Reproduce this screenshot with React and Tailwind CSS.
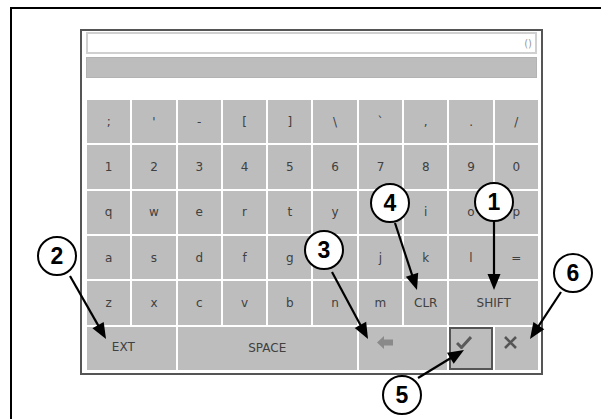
import React from "react";

const rows = [
  [";", "'", "-", "[", "]", "\\", "`", ",", ".", "/"],
  ["1", "2", "3", "4", "5", "6", "7", "8", "9", "0"],
  ["q", "w", "e", "r", "t", "y", "u", "i", "o", "p"],
  ["a", "s", "d", "f", "g", "h", "j", "k", "l", "="],
];
const row5 = ["z", "x", "c", "v", "b", "n", "m", "CLR"];

const arrows = [
  [494, 222, 494, 290],
  [70, 276, 106, 339],
  [332, 272, 368, 339],
  [395, 223, 417, 290],
  [418, 378, 464, 350],
  [561, 292, 530, 339],
];

const circles = [
  { n: "1", x: 494, y: 202 },
  { n: "2", x: 57, y: 256 },
  { n: "3", x: 324, y: 250 },
  { n: "4", x: 390, y: 203 },
  { n: "5", x: 402, y: 395 },
  { n: "6", x: 573, y: 273 },
];

function Arrow({ a }) {
  const [x1, y1, x2, y2] = a;
  const dx = x2 - x1;
  const dy = y2 - y1;
  const len = Math.hypot(dx, dy);
  const ux = dx / len;
  const uy = dy / len;
  const hl = 16;
  const hw = 6.5;
  const bx = x2 - ux * hl;
  const by = y2 - uy * hl;
  const px = -uy;
  const py = ux;
  const pts = `${x2},${y2} ${bx + px * hw},${by + py * hw} ${bx - px * hw},${by - py * hw}`;
  return (
    <g>
      <line x1={x1} y1={y1} x2={bx + ux * 2} y2={by + uy * 2} stroke="#000" strokeWidth="2.2" />
      <polygon points={pts} fill="#000" />
    </g>
  );
}

function Key({ children, className = "" }) {
  return (
    <div className={`bg-[#bdbdbd] flex items-center justify-center text-[12px] text-[#404040] ${className}`}>
      {children}
    </div>
  );
}

export default function App() {
  return (
    <div className="relative w-[601px] h-[419px] bg-white overflow-hidden" style={{ fontFamily: "'DejaVu Sans', sans-serif" }}>
      <div className="mt-[7px] ml-[10px] h-[412px] border-t-2 border-l-2 border-black pt-[20px] pl-[68px]">
        <div className="w-[463px] h-[346px] border-2 border-[#555] bg-white flex flex-col pt-[1px] px-[4px]">
          <div className="relative h-[22px] border-2 border-[#d0d0d0] bg-white">
            <span className="absolute right-[3px] top-[2px] text-[10px] text-[#999]">()</span>
          </div>
          <div className="mt-[3px] h-[21px] bg-[#bdbdbd] border border-[#b3b3b3]" />
          <div className="mt-[22px] ml-[1px] w-[451px] h-[270px] grid grid-cols-10 grid-rows-6 gap-[2px]">
            {rows.map((r, i) => r.map((k, j) => <Key key={`${i}-${j}`}>{k}</Key>))}
            {row5.map((k) => (
              <Key key={k}>{k}</Key>
            ))}
            <Key className="col-span-2">SHIFT</Key>
            <Key className="col-span-2 pr-[16px] pb-[2px]">EXT</Key>
            <Key className="col-span-4">SPACE</Key>
            <Key className="col-span-2 justify-start pl-[18px] pb-[12px]">
              <svg width="16" height="13" viewBox="0 0 16 13">
                <polygon points="0,6.5 7,0 7,3.5 16,3.5 16,9.5 7,9.5 7,13" fill="#8a8a8a" />
              </svg>
            </Key>
            <Key className="border-2 border-[#555] pr-[14px] pb-[12px]">
              <svg width="16" height="14" viewBox="0 0 16 14">
                <path d="M1 8 L5.5 12.5 L15 2" stroke="#5a5a5a" strokeWidth="3" fill="none" />
              </svg>
            </Key>
            <Key className="pr-[12px] pb-[12px]">
              <svg width="15" height="15" viewBox="0 0 15 15">
                <path d="M2 2 L13 13 M13 2 L2 13" stroke="#555" strokeWidth="2.6" fill="none" />
              </svg>
            </Key>
          </div>
        </div>
      </div>

      <svg className="absolute left-0 top-0 pointer-events-none" width="601" height="419">
        {arrows.map((a, i) => (
          <Arrow key={i} a={a} />
        ))}
      </svg>
      {circles.map((c) => (
        <div
          key={c.n}
          className="absolute w-[40px] h-[40px] rounded-full border-2 border-black bg-white flex items-center justify-center text-[23px] font-bold text-black leading-none"
          style={{ left: c.x - 20, top: c.y - 20, fontFamily: "'Liberation Sans', Arial, sans-serif" }}
        >
          {c.n}
        </div>
      ))}
    </div>
  );
}
